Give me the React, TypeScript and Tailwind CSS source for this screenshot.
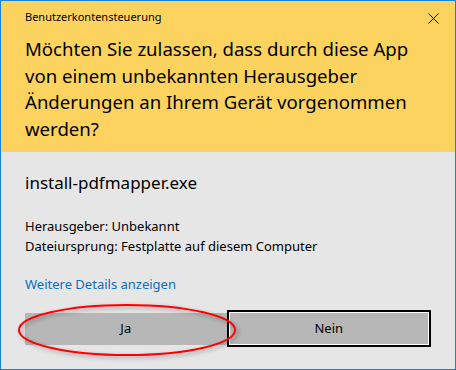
export default function App() {
  return (
    <div
      className="relative w-[456px] h-[370px] border border-[#1883d7] bg-[#e6e6e6] text-black overflow-hidden"
      style={{ fontFamily: '"Noto Sans", "Open Sans", sans-serif' }}
    >
      {/* Header */}
      <div className="h-[151px] bg-[#fdd35f] px-[24px] relative">
        <div className="pt-[8px] text-[11px] leading-[16px]">Benutzerkontensteuerung</div>
        <button className="absolute right-[16px] top-[11px] w-[12px] h-[12px] flex items-center justify-center">
          <svg width="11" height="11" viewBox="0 0 11 11">
            <path d="M0.5 0.5 L10.5 10.5 M10.5 0.5 L0.5 10.5" stroke="#000" strokeWidth="1" fill="none" />
          </svg>
        </button>
        <div className="mt-[11px] text-[18.6px] leading-[26.5px]">
          Möchten Sie zulassen, dass durch diese App von einem unbekannten Herausgeber Änderungen an Ihrem Gerät
          vorgenommen werden?
        </div>
      </div>

      {/* Body */}
      <div className="px-[24px] pt-[20px]">
        <div className="text-[17px] leading-[22px]">install-pdfmapper.exe</div>
        <div className="mt-[22px] text-[13px] leading-[20px]">
          <div>Herausgeber: Unbekannt</div>
          <div>Dateiursprung: Festplatte auf diesem Computer</div>
        </div>
        <div className="mt-[18px] text-[13px] leading-[20px] text-[#0a6fc2]">Weitere Details anzeigen</div>
        <div className="mt-[16px] flex items-center">
          <div className="w-[203px] h-[32px] bg-[#b7b7b7] flex items-center justify-center text-[13px]">Ja</div>
          <div className="w-[206px] h-[37px] border-2 border-black">
            <div className="w-full h-full border border-white bg-[#b7b7b7] flex items-center justify-center text-[13px]">
              Nein
            </div>
          </div>
        </div>
      </div>

      {/* Red ellipse annotation */}
      <svg className="absolute left-0 top-0 pointer-events-none" width="456" height="370">
        <defs>
          <filter id="sh" x="-20%" y="-50%" width="140%" height="200%">
            <feDropShadow dx="2" dy="2" stdDeviation="2" floodColor="#000" floodOpacity="0.35" />
          </filter>
        </defs>
        <ellipse cx="126" cy="329" rx="108" ry="25" fill="none" stroke="#f00" strokeWidth="2" filter="url(#sh)" />
      </svg>
    </div>
  );
}
